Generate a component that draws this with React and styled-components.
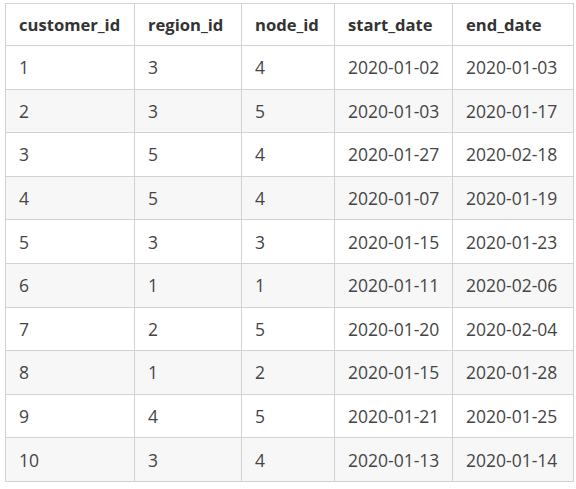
import React from "react";
import styled, { createGlobalStyle } from "styled-components";

const Global = createGlobalStyle`
  html, body { margin: 0; padding: 0; background: #ffffff; }
  body { font-family: "Open Sans", "Noto Sans", sans-serif; }
`;

const Wrap = styled.div`
  padding: 3px 0 0 5px;
`;

const Table = styled.table`
  border-collapse: collapse;
  table-layout: fixed;
  width: 568px;
  color: #3a3a3a;
`;

const Th = styled.th`
  text-align: left;
  font-weight: 700;
  font-size: 16.6px;
  color: #333333;
  border: 1px solid #d2d2d2;
  padding: 0 13px;
  height: 42px;
  box-sizing: border-box;
  white-space: nowrap;
`;

const Tr = styled.tr`
  background: ${(p) => (p.$alt ? "#f7f7f7" : "#ffffff")};
`;

const Td = styled.td`
  border: 1px solid #d2d2d2;
  padding: 0 13px;
  height: 43.6px;
  box-sizing: border-box;
  font-size: 17.5px;
  font-weight: 400;
  color: #454545;
  white-space: nowrap;
`;

const widths = [129, 107, 93, 118, 121];
const headers = ["customer_id", "region_id", "node_id", "start_date", "end_date"];
const rows = [
  [1, 3, 4, "2020-01-02", "2020-01-03"],
  [2, 3, 5, "2020-01-03", "2020-01-17"],
  [3, 5, 4, "2020-01-27", "2020-02-18"],
  [4, 5, 4, "2020-01-07", "2020-01-19"],
  [5, 3, 3, "2020-01-15", "2020-01-23"],
  [6, 1, 1, "2020-01-11", "2020-02-06"],
  [7, 2, 5, "2020-01-20", "2020-02-04"],
  [8, 1, 2, "2020-01-15", "2020-01-28"],
  [9, 4, 5, "2020-01-21", "2020-01-25"],
  [10, 3, 4, "2020-01-13", "2020-01-14"],
];

export default function App() {
  return (
    <Wrap>
      <Global />
      <Table>
        <colgroup>
          {widths.map((w, i) => (
            <col key={i} style={{ width: w }} />
          ))}
        </colgroup>
        <thead>
          <tr>
            {headers.map((h) => (
              <Th key={h}>{h}</Th>
            ))}
          </tr>
        </thead>
        <tbody>
          {rows.map((r, i) => (
            <Tr key={i} $alt={i % 2 === 1}>
              {r.map((c, j) => (
                <Td key={j}>{c}</Td>
              ))}
            </Tr>
          ))}
        </tbody>
      </Table>
    </Wrap>
  );
}
